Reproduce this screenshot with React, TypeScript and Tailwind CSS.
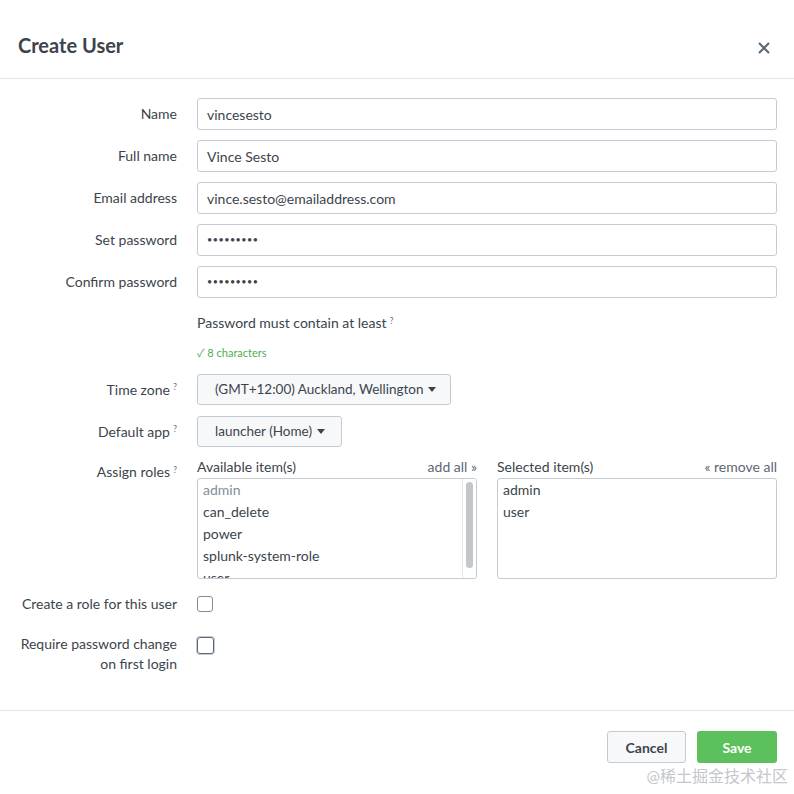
import React from 'react'

const font = { fontFamily: 'Lato, "Noto Sans CJK SC", sans-serif' }

function Label({ children }: { children: React.ReactNode }) {
  return <div className="w-[177px] text-right text-[14px] text-[#3c444d] leading-[20px]">{children}</div>
}

function Q() {
  return <sup className="ml-[3px] text-[9px] text-[#6b7480]">?</sup>
}

function Caret() {
  return (
    <svg width="8" height="5" viewBox="0 0 8 5" className="ml-[5px]">
      <path d="M0 0 L8 0 L4 5 Z" fill="#3c444d" />
    </svg>
  )
}

function TextRow({ label, value, password }: { label: string; value: string; password?: boolean }) {
  return (
    <div className="flex items-center h-[32px] mb-[10px]">
      <Label>{label}</Label>
      <div className="ml-[20px] w-[580px] h-[32px] border border-[#c3cbd4] rounded-[3px] flex items-center px-[9px] text-[14px] text-[#3c444d]">
        {password ? <span className="tracking-[0.5px] text-[9px] text-[#3c444d]">•••••••••</span> : value}
      </div>
    </div>
  )
}

export default function App() {
  const available = ['admin', 'can_delete', 'power', 'splunk-system-role', 'user']

  return (
    <div className="relative w-[794px] h-[794px] bg-white overflow-hidden" style={font}>
      {/* Header */}
      <div className="h-[79px] border-b border-[#e1e6eb] flex justify-between pt-[33px] pl-[18px] pr-[24px]">
        <h1 className="text-[20px] font-bold text-[#3c444d] leading-[24px]">Create User</h1>
        <svg width="12" height="12" viewBox="0 0 12 12" className="mt-[9px]">
          <path d="M1 1 L11 11 M11 1 L1 11" stroke="#5c6773" strokeWidth="2" />
        </svg>
      </div>

      {/* Body */}
      <div className="pt-[19px]">
        <TextRow label="Name" value="vincesesto" />
        <TextRow label="Full name" value="Vince Sesto" />
        <TextRow label="Email address" value="vince.sesto@emailaddress.com" />
        <TextRow label="Set password" value="" password />
        <TextRow label="Confirm password" value="" password />

        <div className="pl-[197px] pt-[5px] text-[14px] text-[#3c444d] leading-[20px]">
          Password must contain at least<Q />
        </div>
        <div className="pl-[197px] mt-[13px] text-[11px] text-[#4caf50] leading-[14px]">✓ 8 characters</div>

        <div className="flex items-center h-[31px] mt-[14px] mb-[11px]">
          <Label>
            Time zone<Q />
          </Label>
          <div className="ml-[20px] w-[254px] h-[31px] pl-[17px] border border-[#c3cbd4] rounded-[3px] bg-[#f7f8fa] flex items-center text-[13.5px] text-[#3c444d]">
            (GMT+12:00) Auckland, Wellington
            <Caret />
          </div>
        </div>
        <div className="flex items-center h-[31px]">
          <Label>
            Default app<Q />
          </Label>
          <div className="ml-[20px] w-[145px] h-[31px] pl-[17px] border border-[#c3cbd4] rounded-[3px] bg-[#f7f8fa] flex items-center text-[13.5px] text-[#3c444d]">
            launcher (Home)
            <Caret />
          </div>
        </div>

        {/* Assign roles */}
        <div className="flex mt-[11px]">
          <div className="pt-[4px]">
            <Label>
              Assign roles<Q />
            </Label>
          </div>
          <div className="ml-[20px] w-[280px]">
            <div className="flex justify-between text-[14px] text-[#3c444d] leading-[18px] h-[20px]">
              <span>Available item(s)</span>
              <span className="text-[#5c6773]">add all »</span>
            </div>
            <div className="relative h-[101px] border border-[#c3cbd4] rounded-[3px] overflow-hidden">
              <div className="pl-[5px] pr-[20px] pt-[0px]">
                {available.map((item, i) => (
                  <div
                    key={item}
                    className={`h-[22px] leading-[22px] text-[14px] ${i === 0 ? 'text-[#818d99]' : 'text-[#3c444d]'}`}
                  >
                    {item}
                  </div>
                ))}
              </div>
              <div className="absolute top-0 right-0 w-[14px] h-full border-l border-[#e1e6eb] bg-white">
                <div className="mx-auto mt-[3px] w-[7px] h-[86px] rounded-[4px] bg-[#c3c7cc]" />
              </div>
            </div>
          </div>
          <div className="ml-[20px] w-[280px]">
            <div className="flex justify-between text-[14px] text-[#3c444d] leading-[18px] h-[20px]">
              <span>Selected item(s)</span>
              <span className="text-[#5c6773]">« remove all</span>
            </div>
            <div className="h-[101px] border border-[#c3cbd4] rounded-[3px] pl-[5px] pt-[0px]">
              {['admin', 'user'].map((item) => (
                <div key={item} className="h-[22px] leading-[22px] text-[14px] text-[#3c444d]">
                  {item}
                </div>
              ))}
            </div>
          </div>
        </div>

        {/* Checkboxes */}
        <div className="flex items-center mt-[16px] h-[18px]">
          <Label>Create a role for this user</Label>
          <div className="ml-[20px] w-[16px] h-[16px] border border-[#818d99] rounded-[3px]" />
        </div>
        <div className="flex mt-[21px]">
          <Label>
            Require password change
            <br />
            on first login
          </Label>
          <div className="ml-[20px] mt-[3px] w-[17px] h-[17px] border-[1.5px] border-[#5c6773] rounded-[3px] shadow-[0_0_0_1px_#c3cbd4]" />
        </div>
      </div>

      {/* Footer */}
      <div className="absolute left-0 right-0 top-[710px] border-t border-[#e1e6eb] flex justify-end gap-[11px] pt-[20px] pr-[17px]">
        <button className="w-[79px] h-[32px] rounded-[3px] border border-[#c3cbd4] bg-[#f7f8fa] text-[14px] font-bold text-[#3c444d]">
          Cancel
        </button>
        <button className="w-[80px] h-[32px] rounded-[3px] bg-[#5cc05c] text-[14px] font-bold text-white">
          Save
        </button>
      </div>

      <div className="absolute right-[6px] top-[765px] text-[16px] text-[#c4c7cc] leading-[22px]">@稀土掘金技术社区</div>
    </div>
  )
}
